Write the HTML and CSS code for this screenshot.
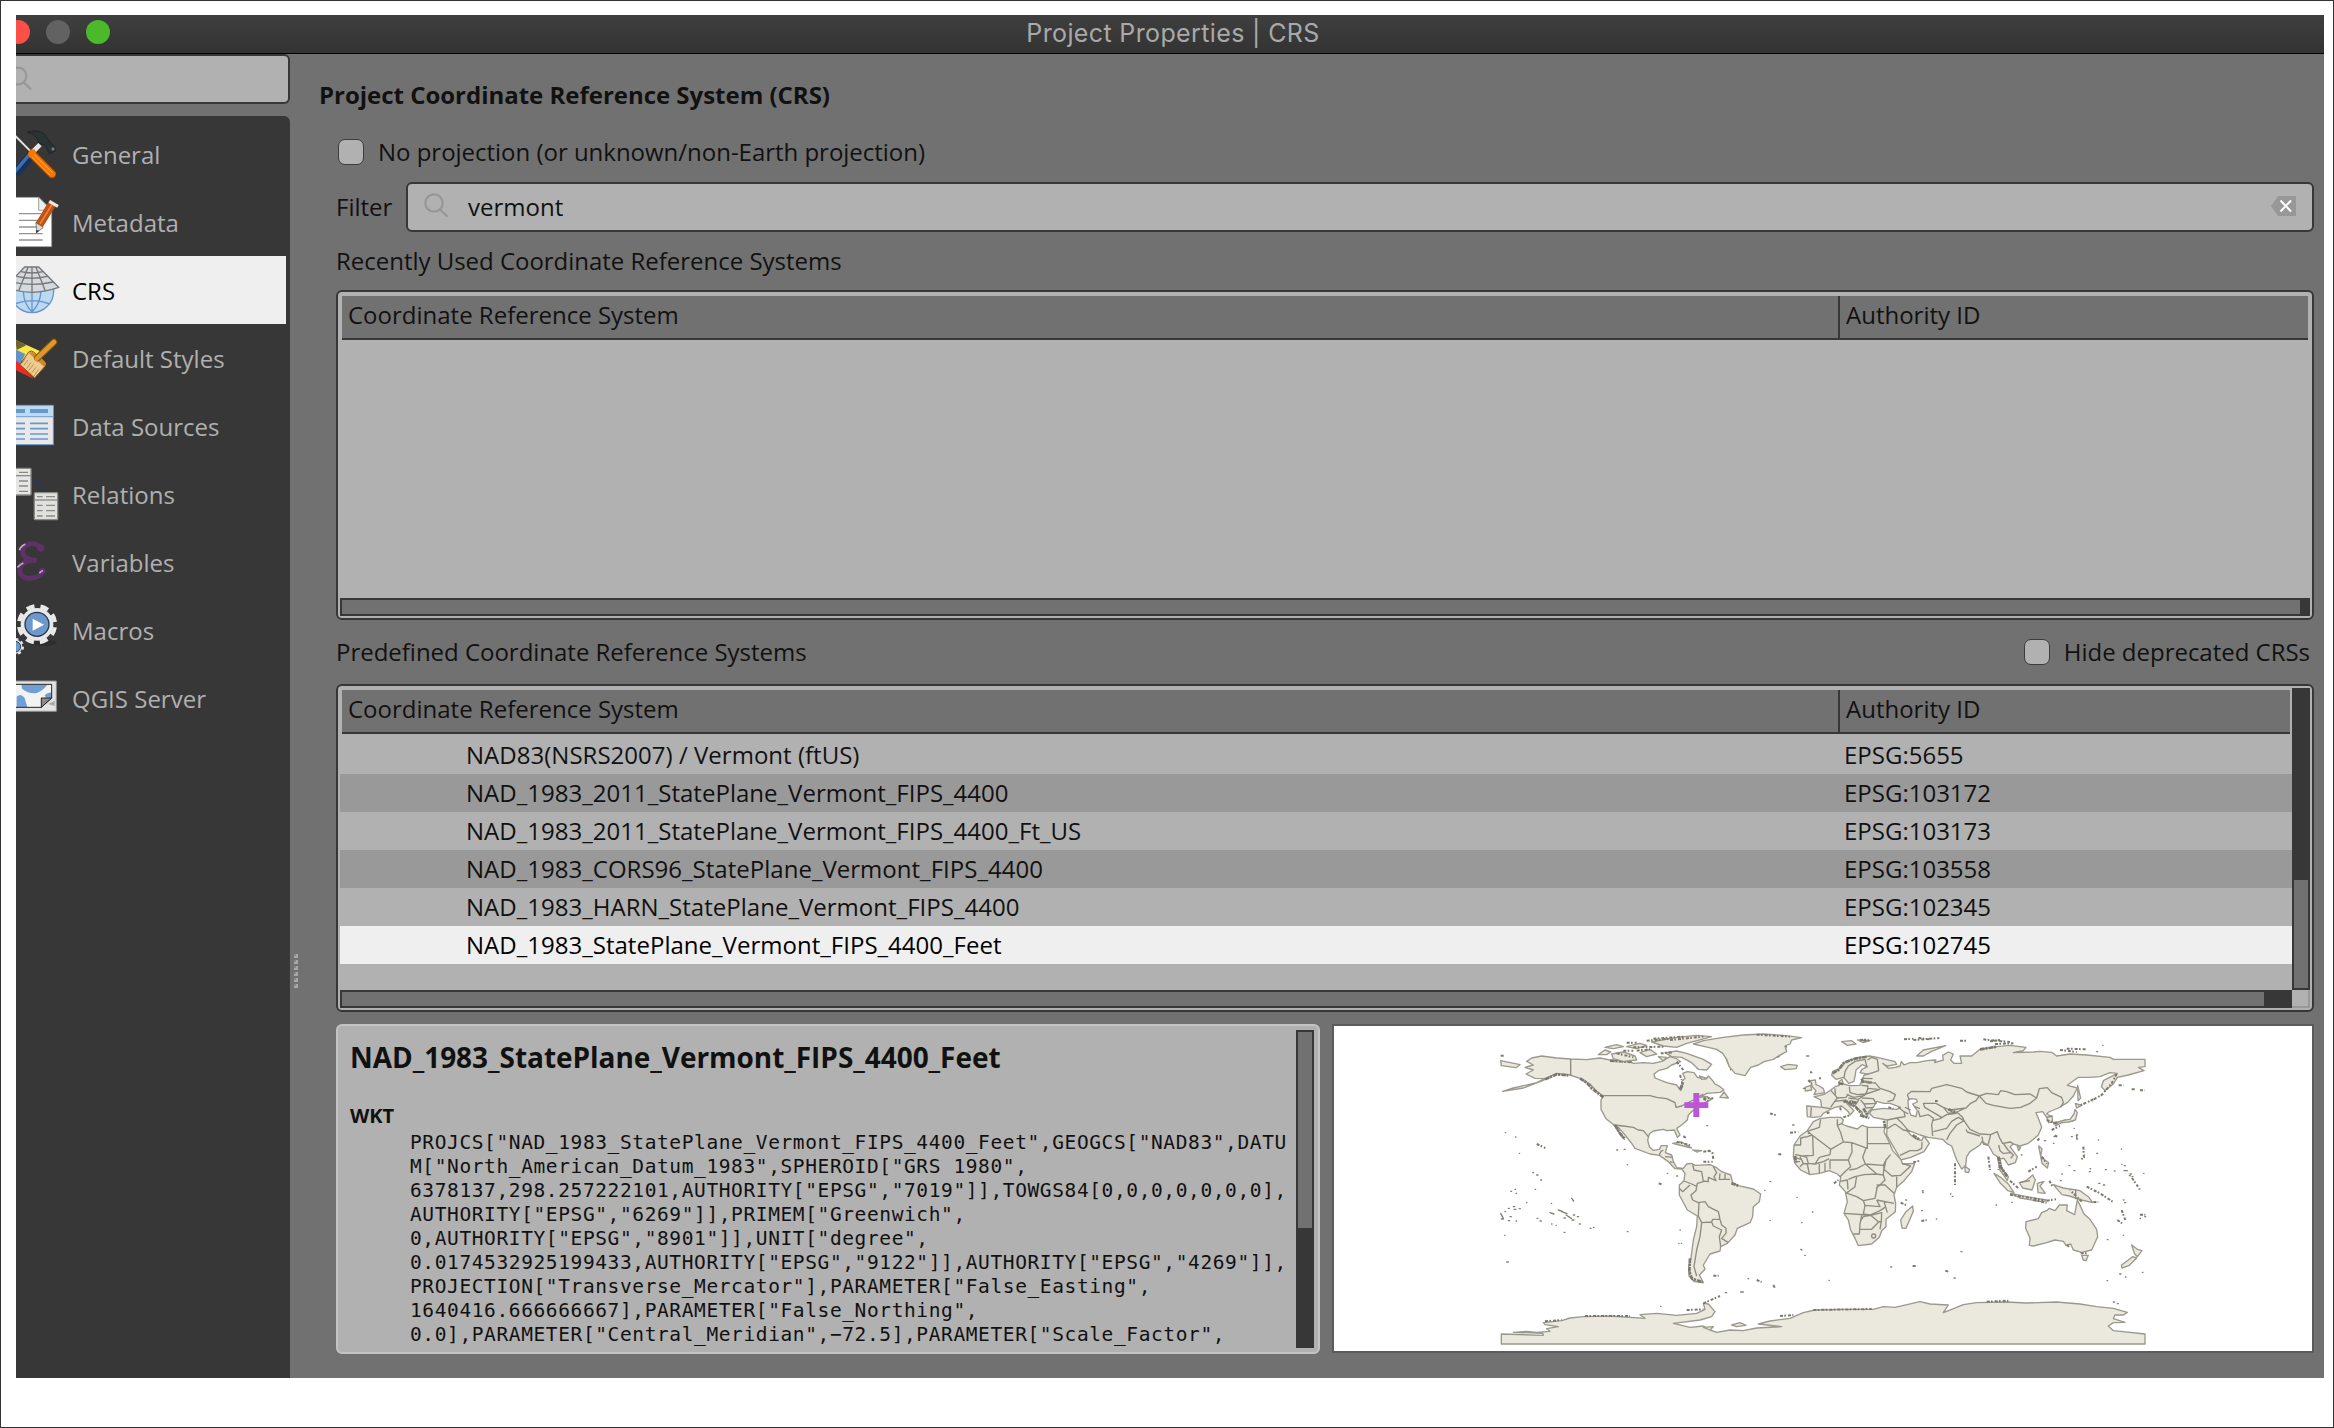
FILE: index.html
```html
<!DOCTYPE html>
<html lang="en">
<head>
<meta charset="utf-8">
<title>Project Properties | CRS</title>
<link rel="stylesheet" href="styles.css">
</head>
<body>
<div class="window">
  <header class="titlebar">
    <span class="light red"></span><span class="light gray"></span><span class="light green"></span>
    <h1 class="window-title">Project Properties | CRS</h1>
  </header>
  <div class="content">
    <aside class="sidebar">
      <div class="search">
        <svg class="search-glass" viewBox="0 0 20 28"><circle cx="2" cy="10" r="8.4"/><path d="M8 16.500L14.500 23"/></svg>
      </div>
      <nav class="nav">
        <a class="item"><svg class="icon" viewBox="48 360 144 204">
          <path d="M46 408L92 454" stroke="#e4e4e4" stroke-width="6"/>
          <path d="M82 396C104 390 124 392 136 406C146 420 150 432 164 440L166 452L148 462C142 452 144 440 130 434L116 428C112 410 100 402 82 396Z" fill="#2b3234" stroke="#171c1e" stroke-width="2"/><circle cx="159" cy="447" r="5" fill="#737a7c"/>
          <path d="M98 456L120 434" stroke="#e6e6de" stroke-width="14"/><path d="M46 520L92 466" stroke="#16335f" stroke-width="26"/><path d="M44 516L88 464" stroke="#3e6eac" stroke-width="10"/>
          <path d="M96 462L156 522" stroke="#b84c00" stroke-width="25" stroke-linecap="round"/><path d="M96 462L156 522" stroke="#f57900" stroke-width="19" stroke-linecap="round"/><path d="M100 462L158 518M94 470L150 526" stroke="#ffa544" stroke-width="3"/>
          <path d="M84 464L90 450L104 448L108 458L96 468L90 474Z" fill="#f57900"/>
        </svg><span>General</span></a>
        <a class="item"><svg class="icon" viewBox="48 564 144 204">
          <path d="M40 592H116L155 630V740H40Z" fill="#fff" stroke="#8c8c8c" stroke-width="2"/><path d="M116 592V631H155Z" fill="#eee" stroke="#777" stroke-width="2"/>
          <path d="M57 641H124M57 661H118M57 681H112M57 701H128M57 720H128" stroke="#929292" stroke-width="4"/>
          <path d="M160 606L117 676" stroke="#be5212" stroke-width="25"/><path d="M157 612L120 672" stroke="#f08040" stroke-width="5"/><path d="M148 604L174 619" stroke="#e8e8e8" stroke-width="9"/>
          <path d="M108 668L130 682L110 698Z" fill="#d8d8d8" stroke="#555" stroke-width="2"/><path d="M109 690L118 692L108 700Z" fill="#333"/>
        </svg><span>Metadata</span></a>
        <a class="item selected"><svg class="icon" viewBox="48 768 144 204">
          <circle cx="96" cy="873" r="65" fill="#b9daf1" stroke="#6c93c9" stroke-width="4"/>
          <path d="M96 870V937M70 875Q72 912 96 936Q120 912 123 875M44 912Q96 892 150 912" fill="none" stroke="#6c93c9" stroke-width="4"/>
          <path d="M74 801H116L176 862Q136 876 96 877Q56 876 16 862Z" fill="#d5dade" stroke="#777" stroke-width="4"/>
          <path d="M96 801V877M84 802L56 873M108 802L136 873M62 815Q96 822 130 815M50 829Q96 840 143 829M34 846Q96 860 160 846" fill="none" stroke="#777" stroke-width="4"/>
        </svg><span>CRS</span></a>
        <a class="item"><svg class="icon" viewBox="48 -18 144 204">
          <path d="M46 30L126 66L100 110L46 80Z" fill="#f9e84c"/><path d="M46 30L80 45L50 60Z" fill="#6b6530"/><path d="M46 58L76 72L60 104L46 98Z" fill="#6391c9"/><path d="M46 92L66 104L100 146L46 120Z" fill="#ee2a24"/>
          <path d="M86 66Q94 60 102 67L134 96Q140 102 134 110L104 144L60 104Z" fill="#eccb93" stroke="#8a5408" stroke-width="3"/><path d="M86 68L132 110L138 102Q136 94 120 82L98 66Z" fill="#d08a24"/><path d="M76 86L66 100M84 90L72 106M92 98L80 116M100 104L86 122M108 112L94 130M116 118L102 138" stroke="#a9712b" stroke-width="2"/>
          <path d="M112 84L162 36" stroke="#8a5408" stroke-width="20" stroke-linecap="round"/><path d="M110 86L162 36" stroke="#dc982e" stroke-width="14" stroke-linecap="round"/>
        </svg><span>Default Styles</span></a>
        <a class="item"><svg class="icon" viewBox="48 186 144 204">
          <path d="M40 226H160V344H40Z" fill="#e8e8e8" stroke="#6b97cb" stroke-width="3"/><path d="M40 228H158V260H40Z" fill="#b9dcf2"/><path d="M40 260H160" stroke="#7fa8d2" stroke-width="4"/>
          <path d="M46 243H75M90 243H144" stroke="#6b97cb" stroke-width="12"/><path d="M46 280H75M90 280H144M46 296H75M90 296H144M46 312H75M90 312H144M46 327H75M90 327H144" stroke="#6b97cb" stroke-width="5"/>
        </svg><span>Data Sources</span></a>
        <a class="item"><svg class="icon" viewBox="48 390 144 204">
          <path d="M94 450H121V490" fill="none" stroke="#2b3a4e" stroke-width="5"/>
          <rect x="20" y="415" width="73" height="80" rx="3" fill="#e6e6e4" stroke="#8b8b84" stroke-width="4"/><path d="M20 437H93" stroke="#8b8b84" stroke-width="4"/><path d="M57 427H84M57 453H84M57 468H84M57 484H84" stroke="#8b8b84" stroke-width="4"/>
          <rect x="103" y="488" width="70" height="81" rx="3" fill="#e0e0de" stroke="#8b8b84" stroke-width="4"/><path d="M103 510H173" stroke="#8b8b84" stroke-width="4"/><path d="M111 500H128M138 500H165M111 526H128M138 526H165M111 542H128M138 542H165M111 558H128M138 558H165" stroke="#8b8b84" stroke-width="4"/>
        </svg><span>Relations</span></a>
        <a class="item"><svg class="icon" viewBox="48 594 144 204">
          <path d="M118 652C114 638 72 634 68 660C66 682 86 690 110 691C80 690 58 700 60 724C64 754 118 750 128 724" fill="none" stroke="#5f3169" stroke-width="15" stroke-linecap="round"/><circle cx="122" cy="654" r="11" fill="#5f3169"/><circle cx="127" cy="724" r="10" fill="#5f3169"/>
          <path d="M58 661Q62 648 76 643M52 712Q60 704 70 699M118 730Q122 724 129 722" fill="none" stroke="#c3a5c9" stroke-width="5"/>
        </svg><span>Variables</span></a>
        <a class="item"><svg class="icon" viewBox="48 798 144 204">
          <ellipse cx="128" cy="938" rx="42" ry="10" fill="#262626" opacity=".5"/>
          <circle cx="111" cy="883" r="49" fill="#e8e8e8"/><circle cx="111" cy="883" r="54" fill="none" stroke="#e8e8e8" stroke-width="13" stroke-dasharray="24 18.410" stroke-dashoffset="-9"/>
          <circle cx="111" cy="883" r="36" fill="#6c98cb" stroke="#26384e" stroke-width="4"/><path d="M98 866V902L132 884Z" fill="#fff"/>
          <circle cx="46" cy="950" r="21" fill="#e8e8e8"/><circle cx="46" cy="950" r="23" fill="none" stroke="#e8e8e8" stroke-width="6" stroke-dasharray="9 9"/><circle cx="46" cy="950" r="16" fill="#6c98cb" stroke="#26384e" stroke-width="3"/>
        </svg><span>Macros</span></a>
        <a class="item"><svg class="icon" viewBox="48 1002 144 204">
          <path d="M40 1053H169V1144H40Z" fill="#e2e2e2" stroke="#8f8f8f" stroke-width="3"/><path d="M144 1122L164 1112V1128Z" fill="#aaa"/>
          <path d="M40 1063H155V1104L124 1132H40Z" fill="#f2f2f2"/><path d="M64 1064H142Q128 1082 112 1088Q90 1094 66 1076ZM50 1100Q62 1088 74 1104L82 1131H50ZM134 1096Q144 1086 154 1088V1103H138Z" fill="#6f9fd6"/>
          <path d="M40 1063H155V1104L124 1132H40" fill="none" stroke="#222" stroke-width="3"/><path d="M124 1132V1104H155Z" fill="#8c8c8c" stroke="#222" stroke-width="3"/>
        </svg><span>QGIS Server</span></a>
      </nav>
    </aside>
    <div class="splitter"><i></i><i></i><i></i><i></i><i></i><i></i></div>
    <main class="panel">
      <h2 class="heading">Project Coordinate Reference System (CRS)</h2>
      <div class="group">
        <label class="check no-projection"><span class="box"></span><span>No projection (or unknown/non-Earth projection)</span></label>
        <div class="filter">
          <span>Filter</span>
          <div class="field">
            <svg class="glass" viewBox="0 0 26 26"><circle cx="10" cy="10" r="8.700"/><path d="M16 16.500L22.800 23"/></svg>
            <span class="value">vermont</span>
            <svg class="clear" viewBox="0 0 26 20"><path d="M0 10L7 0H25V20H7Z" fill="#989898"/><path d="M9.500 4.500L20 15.500M20 4.500L9.500 15.500" stroke="#fff" stroke-width="2"/></svg>
          </div>
        </div>
        <div class="label recent-label">Recently Used Coordinate Reference Systems</div>
        <section class="tree recent">
          <div class="head"><span class="col-name">Coordinate Reference System</span><span class="col-id">Authority ID</span></div>
          <div class="rows"></div>
          <div class="hbar"><span class="thumb"></span></div>
        </section>
        <div class="between"><span>Predefined Coordinate Reference Systems</span><label class="check"><span class="box"></span><span>Hide deprecated CRSs</span></label></div>
        <section class="tree predefined">
          <div class="tree-main">
            <div class="head"><span class="col-name">Coordinate Reference System</span><span class="col-id">Authority ID</span></div>
            <div class="rows">
              <div class="row"><span class="name">NAD83(NSRS2007) / Vermont (ftUS)</span><span>EPSG:5655</span></div>
              <div class="row alt"><span class="name">NAD_1983_2011_StatePlane_Vermont_FIPS_4400</span><span>EPSG:103172</span></div>
              <div class="row"><span class="name">NAD_1983_2011_StatePlane_Vermont_FIPS_4400_Ft_US</span><span>EPSG:103173</span></div>
              <div class="row alt"><span class="name">NAD_1983_CORS96_StatePlane_Vermont_FIPS_4400</span><span>EPSG:103558</span></div>
              <div class="row"><span class="name">NAD_1983_HARN_StatePlane_Vermont_FIPS_4400</span><span>EPSG:102345</span></div>
              <div class="row current"><span class="name">NAD_1983_StatePlane_Vermont_FIPS_4400_Feet</span><span>EPSG:102745</span></div>
            </div>
            <div class="hbar"><span class="thumb"></span></div>
          </div>
          <div class="tree-side"><div class="vbar"><span class="thumb"></span></div><div class="corner"></div></div>
        </section>
        <div class="bottom">
          <section class="details">
            <div class="details-text">
              <h3>NAD_1983_StatePlane_Vermont_FIPS_4400_Feet</h3>
              <h4>WKT</h4>
              <pre>PROJCS["NAD_1983_StatePlane_Vermont_FIPS_4400_Feet",GEOGCS["NAD83",DATU
M["North_American_Datum_1983",SPHEROID["GRS 1980",
6378137,298.257222101,AUTHORITY["EPSG","7019"]],TOWGS84[0,0,0,0,0,0,0],
AUTHORITY["EPSG","6269"]],PRIMEM["Greenwich",
0,AUTHORITY["EPSG","8901"]],UNIT["degree",
0.0174532925199433,AUTHORITY["EPSG","9122"]],AUTHORITY["EPSG","4269"]],
PROJECTION["Transverse_Mercator"],PARAMETER["False_Easting",
1640416.666666667],PARAMETER["False_Northing",
0.0],PARAMETER["Central_Meridian",−72.5],PARAMETER["Scale_Factor",</pre>
            </div>
            <div class="vbar"><span class="thumb"></span></div>
          </section>
          <div class="map">
            <svg viewBox="-468 18 2934 975">
              <!-- Antarctica -->
              <path class="land" d="M34 972V942L160 946 158 940 70 937 110 934 140 937 180 934 170 926 205 920 165 914 160 908 215 902 240 894 280 890 360 888 465 895 450 884 500 880 560 886 620 880 645 868 640 850 655 852 675 875 665 890 630 900 550 910 600 922 640 918 660 930 680 937 720 930 760 932 800 924 875 920 805 912 840 903 900 895 940 878 975 870 1060 868 1150 868 1180 860 1215 862 1290 845 1320 852 1375 855 1360 878 1385 868 1420 854 1460 848 1550 846 1610 849 1700 846 1770 852 1820 860 1870 865 1912 877 1900 885 1875 885 1870 896 1905 907 1870 908 1855 918 1870 932 1965 942V972Z"/>
              <!-- Americas -->
              <path class="land" d="M110 124L125 114 155 108 200 114 242 117 290 119 330 114 370 122 410 120 430 130 460 128 490 130 515 124 540 110 560 116 572 125 545 135 530 145 505 152 492 162 495 174 530 188 560 195 572 212 578 200 575 185 585 175 578 160 592 155 612 158 622 172 648 177 655 168 668 182 675 192 690 200 702 210 690 217 650 220 630 232 650 229 665 238 640 250 625 262 605 275 595 285 592 300 575 315 560 325 570 345 562 352 553 330 530 332 520 328 490 333 478 342 473 360 478 380 490 391 508 388 514 377 532 377 526 398 545 405 550 425 560 443 580 445 590 432 605 430 615 436 660 434 678 442 695 455 722 465 728 488 745 497 790 507 812 522 808 545 790 560 788 590 780 608 742 625 735 645 712 670 692 680 690 693 660 702 640 735 645 748 628 765 640 788 612 785 597 768 596 740 603 715 610 660 620 620 622 588 592 570 568 525 568 495 582 482 585 460 575 447 555 446 535 425 508 406 480 402 435 385 425 370 405 345 385 322 383 330 403 358 395 350 372 315 348 296 333 268 333 240 340 228 322 215 300 192 270 175 240 165 200 160 175 172 158 182 100 204 38 214 70 204 140 188 165 176 135 175 108 162 130 150 105 142 130 135Z"/>
              <path class="line" d="M242 117V167M340 227H480L500 232 530 236 555 248 558 262 575 258 590 250 610 240 640 222M370 315L400 318 430 322 445 330 460 332 475 350M508 406L512 395 520 390M525 410L548 412M540 425L548 428M608 435L612 450 635 455 640 485M640 485L622 490 618 512 603 525 608 540 625 548 645 545 655 560 685 575 690 598M670 440L680 458 672 470 678 482 655 472 655 485 640 483M690 460L688 478 720 478M705 462V478M582 483L605 492 622 500M568 505L578 515 600 495M627 548L625 588 635 608 665 606 668 598 690 598 695 615 708 625 708 640 695 655 715 668M665 606L670 618 695 630 688 650 692 680M635 608L630 650 620 690 612 740 620 768"/>
              <path class="dense" d="M270 175L290 188 305 205 322 218 340 232M600 715L598 755 606 776 638 787M705 95L712 120 725 150M890 60L885 92 860 112M165 178L200 163 235 166M375 315L390 340 405 357M570 208L580 185M360 122L425 126M724 490L745 497"/>
              <!-- Greenland and the Canadian islands -->
              <path class="land" d="M610 72L640 62 700 52 760 45 820 42 880 46 935 53 905 60 900 72 885 78 890 95 870 105 850 118 822 125 805 135 782 142 765 167 735 160 718 140 710 118 698 100 680 88 645 80ZM525 98L560 93 590 100 640 118 665 133 650 150 625 148 605 128 575 112 545 110ZM365 102L400 96 435 108 440 120 400 124 370 116ZM325 104L345 90 362 96 350 104ZM485 66L560 52 620 46 665 50 590 70 560 82 520 78ZM450 98L480 88 500 102 470 110ZM345 82L380 74 400 80 370 86ZM410 80L450 70 470 76 440 86ZM505 110L530 112 520 122ZM690 232L702 216 715 234ZM548 370L575 366 605 384 580 378ZM608 390L635 392 620 396ZM872 140L895 133 922 136 918 146 885 149ZM32 122L90 134 78 143 34 137ZM628 168L650 175 635 178ZM640 922L670 920 660 930ZM725 915L750 908 768 916 740 920Z"/>
              <path class="dense thin" d="M410 68H440M430 82L520 80M470 62L540 56M440 92L480 88M512 100L545 98M560 125L580 150M570 165L575 180M490 56L580 50M400 92H430M380 100L430 112M540 60L640 50M800 44L900 50M640 236L655 244M655 390L668 400 670 420M640 425H668M560 365L600 376M640 850L690 828M590 870L640 868M285 888H420M165 904L215 900M640 395L660 392M32 107H45M140 372L166 384M640 235H670M506 490L518 494M670 767H686M800 780L815 786M850 795L856 806M840 280L862 287M865 402L876 404M900 338L925 336M580 348L590 356"/>
              <!-- Europe and Asia -->
              <g transform="translate(870)">
                <path class="land" d="M80 258L125 262 122 240 102 230 118 227 135 222 152 210 165 200 178 196 176 186 186 178 190 192 210 197 240 196 246 180 252 166 272 160 258 162 240 158 246 148 262 140 246 134 228 150 226 164 222 184 206 190 198 180 190 172 168 178 155 166 158 154 180 145 198 124 230 114 268 108 292 112 345 125 350 133 322 138 308 130 325 145 346 142 360 138 364 124 372 135 390 128 410 128 440 122 468 120 464 128 490 120 488 106 505 96 520 102 512 120 522 130 545 130 540 108 575 108 600 88 650 80 690 76 738 82 730 92 700 98 760 96 780 94 815 97 830 108 870 102 920 105 990 112 1000 118 1095 118V140L1075 142 1092 152 1045 165 1012 172 1000 192 975 212 964 200 970 182 1012 160 990 158 960 170 930 172 895 172 862 196 892 204 880 228 862 248 835 264 806 276 800 282 816 290 818 306 806 308 800 292 788 275 768 278 775 295 785 322 775 345 745 370 720 378 700 372 690 380 712 410 706 428 685 435 672 415 660 416 665 445 685 470 682 482 660 450 652 410 640 402 625 375 605 365 600 375 570 395 560 410 557 437 545 447 530 420 515 378 500 370 488 358 445 352 420 345 395 335 380 330 392 345 405 355 425 362 432 348 448 370 432 395 392 412 362 420 355 405 340 380 320 345 322 300 280 292 268 280 275 270 310 265 350 268 362 262 330 250 312 250 290 244 280 262 265 275 262 290 250 290 245 275 225 258 200 250 215 265 222 272 210 285 205 275 185 258 165 262 148 270 130 280 122 290 100 292 82 290Z"/>
                <path class="water" d="M384 240L395 236 410 238 412 246 398 252 412 272 408 290 392 285 385 262Z"/>
                <path class="line" d="M192 174L195 155 205 138 225 124 255 118 260 138M262 120L275 112 292 118 296 152 272 160M246 184L268 190 285 188 300 205 330 215 346 224 340 240 322 245M244 196L264 198 262 212 256 222 232 224 210 218 208 200M165 205L166 226 172 234 198 232 205 222M152 211L166 226M172 234L164 244 152 262M164 244L200 240M200 224L222 232 255 226M205 234L236 238 246 230 258 222 300 208M246 234L280 236 288 250 252 252 242 240M252 252L258 264 280 262M236 240L225 256M248 175L278 176M248 183L276 186M94 262L92 290M126 262L152 266M262 205L296 208M355 262L372 275 375 290 365 292M375 262L392 270M372 275L385 282M382 224L395 214 450 215 455 205 500 194 545 205 560 216 598 228 588 242 572 250 558 264 510 270 490 262 468 250 430 250 434 262 465 280 485 292M420 266L405 260M382 224L388 240M490 262L505 280 530 276 558 264M415 272L420 290 445 284 460 295 455 315 458 348M458 302L480 296 500 284 530 280M460 335L500 325 515 304 535 292 552 302M500 360L510 340 530 315 552 302 548 292 530 276M552 302L570 328 600 342 632 344 652 335 658 352 668 370 692 366 700 372M558 328L562 336 600 348M606 350L610 372 624 376M632 344L625 372M656 375L660 392 672 402M670 370L684 390 700 405 692 415M672 400L692 398M598 228L620 220 655 224 662 212 680 215 705 224 750 222 770 234 750 250 722 262 690 265 640 256 618 250Z M770 234L778 206 802 203 815 218 845 232 850 248 842 262M322 300L350 294 375 290M350 294L365 308 385 332M345 312L322 326M345 312L370 330 390 334M360 406L390 392 412 392 425 385 426 366M800 292L818 288M205 246L215 258M212 240L228 252"/>
                <!-- Africa -->
                <path class="land" d="M120 296L150 292 182 292 190 300 186 312 200 318 232 327 246 316 265 322 315 322 312 335 330 372 338 392 362 418 368 432 404 430 395 455 372 482 350 502 342 525 347 550 346 575 318 598 318 620 305 632 298 652 275 672 235 677 225 655 212 630 205 600 192 580 202 545 196 515 178 495 182 472 172 462 148 452 118 460 90 464 62 450 45 430 40 410 42 375 60 348 82 332 100 305Z"/>
                <path class="line" d="M42 375H62V354L82 350 96 345M82 334L96 345 152 388 190 366 182 338 172 316 172 298M82 334L118 322 122 298M172 316L186 310M98 348L100 406 68 408 45 404M152 388L150 404 118 412 105 432 85 430 80 412 68 408M190 366L215 368 262 385V321M264 371H328M215 368L216 396 205 420 150 420M150 420V448M135 428V455M118 432V460M105 432L130 425 148 416M205 420L212 440 198 452 180 470M258 385L248 412 256 432 230 446 208 450M256 432L290 462 252 464 225 470 205 478M256 432L310 436 318 420 332 404M318 420L312 448 335 468 362 466 392 438 366 430M350 502V470M290 462L310 465 312 436M310 465L315 480 300 495 288 505M290 495H315L342 520M230 468L225 500 205 515 198 520M180 484L202 480 204 508M202 520L230 530 250 542 285 535 292 500M250 542L255 556 300 560 290 540M255 556L250 582 270 585 300 572 318 560M290 540L342 550M193 580L260 585M245 586L240 612 238 642H220M242 602L250 590 272 586 296 606 275 628 240 628M272 586L305 578 304 604 296 606M304 604L300 628M312 545L322 578M60 410L70 430 60 440M82 432L88 462M70 432L85 430M45 412L62 418M45 425H60"/>
                <circle class="line" cx="281" cy="648" r="6"/>
                <path class="dense" d="M158 160L175 150 192 128 225 116 262 110M205 246L228 262 245 282M240 286L268 294M250 265L262 285M245 176L250 190M176 190L190 192M505 268L525 276M600 88L650 80M316 325L312 302M655 410L662 440 682 470M820 310L880 300M45 408L48 428M398 345L420 360M190 244L230 248M786 412L800 436"/>
                <!-- Islands -->
                <path class="land" d="M92 182L106 180 108 194 118 198 130 206 134 218 102 224 108 212 98 202ZM75 202L92 196 95 210 76 213ZM826 318L835 306 855 300 870 298 882 282 885 268 892 278 886 300 866 306 845 308ZM886 250L905 256 890 264ZM893 196L902 235 894 242ZM410 108L430 90 497 77 455 94 430 108ZM185 65L215 62 228 72 202 76ZM232 60L270 62 250 68ZM554 438L568 448 566 458 556 456ZM712 380L722 382 716 392ZM642 460L662 472 685 492 702 518 684 512 660 488ZM692 520L740 530 800 540 790 546 720 534ZM718 488L738 482 758 465 766 480 756 510 728 504ZM772 490L792 484 780 498 796 520 774 518ZM820 494L850 504 900 512 925 530 938 548 905 540 868 528 846 524ZM776 378L786 386 782 410 806 428 802 444 786 430ZM738 605L775 596 785 578 800 572 808 565 825 572 838 555 862 555 860 572 884 584 892 540 902 560 912 582 930 598 950 628 953 650 935 690 905 697 880 690 872 672 858 676 850 664 825 660 800 668 760 678 748 676 750 655 737 625ZM905 706L925 706 918 722 910 720ZM1055 675L1072 688 1086 692 1072 710 1064 702ZM1058 710L1070 714 1048 736 1026 744 1024 736ZM398 558L400 574 378 625 366 624 362 600 378 575Z"/>
                <path class="line" d="M887 508V538M720 488L750 482"/>
                <path class="dense thin" d="M372 58L400 56M400 60L478 54M415 54L450 58M250 62L275 60M610 58L690 66M630 64L660 60M645 72L700 70M860 86L920 88M540 62H560M840 90L890 96M940 238L910 252 895 258M1010 162L995 190 965 225 935 242M690 524L790 540M800 542L828 538M808 482L818 500M832 350L820 345M778 355L772 362M785 410L800 432M745 455L770 440M920 500L960 520 998 545M940 546H955M1025 570L1036 600M1012 600L1026 610M1080 584L1096 584M1056 474L1074 500M625 410L630 450M690 482L715 505M860 675L870 682M902 700H925M1055 208H1068M1080 211H1094M1016 196H1030M162 490L175 480M465 243H473M90 157H95M85 180L95 192M120 172V178M240 60L265 58M910 380L912 412 904 418M496 752L508 756M398 738H408M424 603L440 600M362 548L378 555M400 427L420 422M140 280L150 276M190 292L208 286M180 262L184 275M325 262L340 266M100 870L275 867M620 845L685 842M0 888L40 885M525 430V495M660 435L655 450M760 540L800 548M905 545L870 510M815 330L840 318M800 300L828 310"/>
              </g>
              <path class="dots" d="M46 338h1M77 351h1M88 400h1M128 458h3M140 465h4M152 480h3M135 508h2M75 508h2M62 514h3M78 520h2M184 550h1M110 548h1M245 535l6 8M32 580l8 15M45 575h2M55 565h3M70 560h4M72 568h6M88 566h3M60 590h4M55 602h4M78 603h2M34 597h6M180 578l12 4M205 570l12 4M215 575l16 6M228 585l16 10M250 585h4M262 590h4M246 600h6M268 612h3M222 594h4M141 595h3M150 603h4M185 612h1M198 616h1M222 637h3M300 625h3M310 622h2M44 646h1M50 726h5M412 635h2M412 434h1M380 390h3M402 388h4M532 460h1M560 468h3M570 630h1M566 670h1M574 670h1M650 317h3M950 108h6M962 157h4M940 205h6M908 315h4M840 485h2M824 511h1M921 532h1M967 576h2M840 601h1M932 688h2M944 706h2M774 776h2M752 816h8M706 818h4M512 859h1M1017 781h1M1202 741h3M1297 513h3M1298 518h2M1387 529h2M1382 522h1M1295 572h2M1339 597h1M1518 555h2M1565 547h2M1413 695h3M1392 774h4M1711 482h3M1715 462h2M1737 437h2M1752 452h3M1798 455h3M1800 446h2M1846 449h3M1873 453h2M1894 387h1M1895 433h1M1903 437h3M1902 452h10M1920 462h4M1926 470h3M1918 467h3M1961 460h1M1947 507h3M1825 360h1M1752 325h1M1759 345h4M1760 357h3M1690 370h2M1663 362h4M1692 350h3M1594 405h2M1820 400h3M1826 490h4M1840 495h4M1904 548h3M1900 540h2M1964 590h3M1950 595h2M1852 659h2M1900 646h1M1889 762h4M1906 771h2M1957 757h2M1851 782h2M1870 846h4M1882 851h3M1744 350h3M1760 345v10M1247 540h3M1393 470h2M935 608h1M1820 95h3M1838 76h1M955 340h4M935 690h1"/>
              <path d="M610 219H628V247H655V264H628V291H610V264H583V247H610Z" fill="#bb56d8"/>
            </svg>
          </div>
        </div>
      </div>
    </main>
  </div>
</div>
</body>
</html>
```
FILE: styles.css
```css
*{box-sizing:border-box}
html,body{height:100%}
body{margin:0;padding:14px 9px 0 15px;border:1px solid #333;background:#fff;font:24px/32px "Open Sans","Noto Sans",sans-serif;color:#111;overflow:hidden}
h1,h2,h3,h4,pre{margin:0}
.window{width:2308px;height:1363px;display:flex;flex-direction:column;overflow:hidden;background:#717171}
.titlebar{height:39px;flex:none;display:flex;align-items:center;border-bottom:1px solid #000;background:linear-gradient(#3f3f3f,#333);padding-bottom:4px}
.light{width:24px;height:24px;border-radius:50%;margin-right:16px;flex:none}
.red{background:#ff5047;margin-left:-10px}
.gray{background:#626262}
.green{background:#4bb92a}
.window-title{flex:1;padding:2px 104px 0 0;text-align:center;font:400 25px/32px Inter,sans-serif;letter-spacing:.37px;color:#a9a9a9}
.content{flex:1;display:flex;min-height:0}
.sidebar{width:274px;display:flex;flex-direction:column;flex:none}
.search{height:50px;border:2px solid #373737;border-left:0;border-radius:0 6px 6px 0;background:#b1b1b1;padding:10px 0 8px}
.search svg{display:block;width:20px;height:28px}
.search-glass,.glass{fill:none;stroke:#979797;stroke-width:2.2;stroke-linecap:round}
.nav{margin-top:12px;flex:1;background:#373737;border-radius:0 6px 0 0;padding:4px 4px 0 0}
.item{display:flex;align-items:center;height:68px;color:#b0b0b0}
.item span{padding-top:2px}
.item.selected{background:#efefef;color:#000}
.icon{width:48px;height:68px;margin-right:8px;fill:none;overflow:hidden}
.splitter{width:12px;padding:900px 0 0 4px;display:flex;flex-direction:column;gap:2px;flex:none}
.splitter i{width:4px;height:4px;background:linear-gradient(#888,#888) 0 0/2px 2px no-repeat #a8a8a8}
.panel{flex:1;padding:25px 10px 0 17px;display:flex;flex-direction:column}
.heading{font-size:24px;line-height:32px;letter-spacing:-.02px}
.group{padding-left:17px;display:flex;flex-direction:column}
.check{display:flex;align-items:center;gap:14px}
.box{width:26px;height:26px;border:1.500px solid #3c3c3c;border-radius:7px;background:#b1b1b1;flex:none}
.no-projection{margin:25px 0 0 2px;height:32px;letter-spacing:-.02px}
.filter{margin-top:14px;height:50px;display:flex;align-items:center;justify-content:space-between}
.field{width:1908px;height:50px;border:2px solid #373737;border-radius:6px;background:#b1b1b1;display:flex;align-items:center;padding:0 15px 0 16px}
.glass{width:26px;height:26px;margin:0 18px 2px 0}
.value{flex:1}
.clear{width:26px;height:20px;margin-bottom:2px}
.recent-label{margin-top:13px;letter-spacing:-.02px}
.tree{margin-top:13px;border:2px solid #373737;border-radius:6px;background:#b1b1b1}
.recent{height:330px;padding:4px 2px 2px;display:flex;flex-direction:column}
.head{height:44px;flex:none;margin:0 2px;background:#717171;border-bottom:2px solid #373737;display:flex;line-height:38px;padding-left:6px}
.col-name{width:1492px;border-right:2px solid #373737}
.col-id{padding-left:6px}
.rows{flex:1}
.hbar{height:18px;background:#373737;padding:2px;flex:none}
.thumb{display:block;background:#717171;height:14px}
.recent .thumb{width:1958px}
.between{margin-top:16px;height:32px;display:flex;justify-content:space-between;padding-right:4px;letter-spacing:-.02px}
.predefined{margin-top:16px;height:328px;display:flex;padding:2px}
.tree-main{flex:1;display:flex;flex-direction:column;padding-top:2px}
.tree-main .rows{padding-top:2px}
.row{height:38px;line-height:38px;display:flex;padding-left:126px}
.row.alt{background:#999}
.row.current{background:#efefef;color:#000}
.name{width:1378px;letter-spacing:.02px}
.tree-main .thumb{width:1922px}
.tree-side{width:18px}
.vbar{background:#373737;width:18px;padding:2px}
.vbar .thumb{width:14px}
.tree-side .vbar{height:302px;padding-top:192px}
.tree-side .thumb{height:108px}
.corner{height:18px;border:2px solid #999;border-width:0 2px 2px 0}
.bottom{margin-top:12px;height:330px;display:flex;gap:12px;align-items:flex-start}
.details{width:984px;height:330px;border:2px solid #c4c4c4;border-radius:6px;background:#b1b1b1;display:flex;padding:4px}
.details-text{flex:1;padding-left:8px;padding-top:7px}
.details h3{font-size:28px;line-height:40px;letter-spacing:-.04px}
.details h4{font-size:20px;line-height:28px;margin-top:25px}
.details pre{font:19.500px/24px "DejaVu Sans Mono",monospace;letter-spacing:.61px;margin:1px 0 0 60px}
.details .vbar{height:318px}
.details .vbar .thumb{height:196px}
.map{flex:1;height:329px;border:2px solid #5b5b5b;background:#fff}
.map svg{display:block;width:978px;height:325px}
.land,.line,.water,.dense,.dots{stroke:#9b988c;stroke-width:4;stroke-linejoin:round;fill:none}
.land{fill:#ebe9de}
.line{stroke:#8e8b7f}
.water{fill:#fff}
.dense{stroke:#7c796c;stroke-width:8;stroke-dasharray:14 2 7 3}
.dense.thin{stroke-width:6;stroke-dasharray:9 4 5 6}
.dots{stroke:#838073;stroke-width:4;stroke-linecap:round}
```
